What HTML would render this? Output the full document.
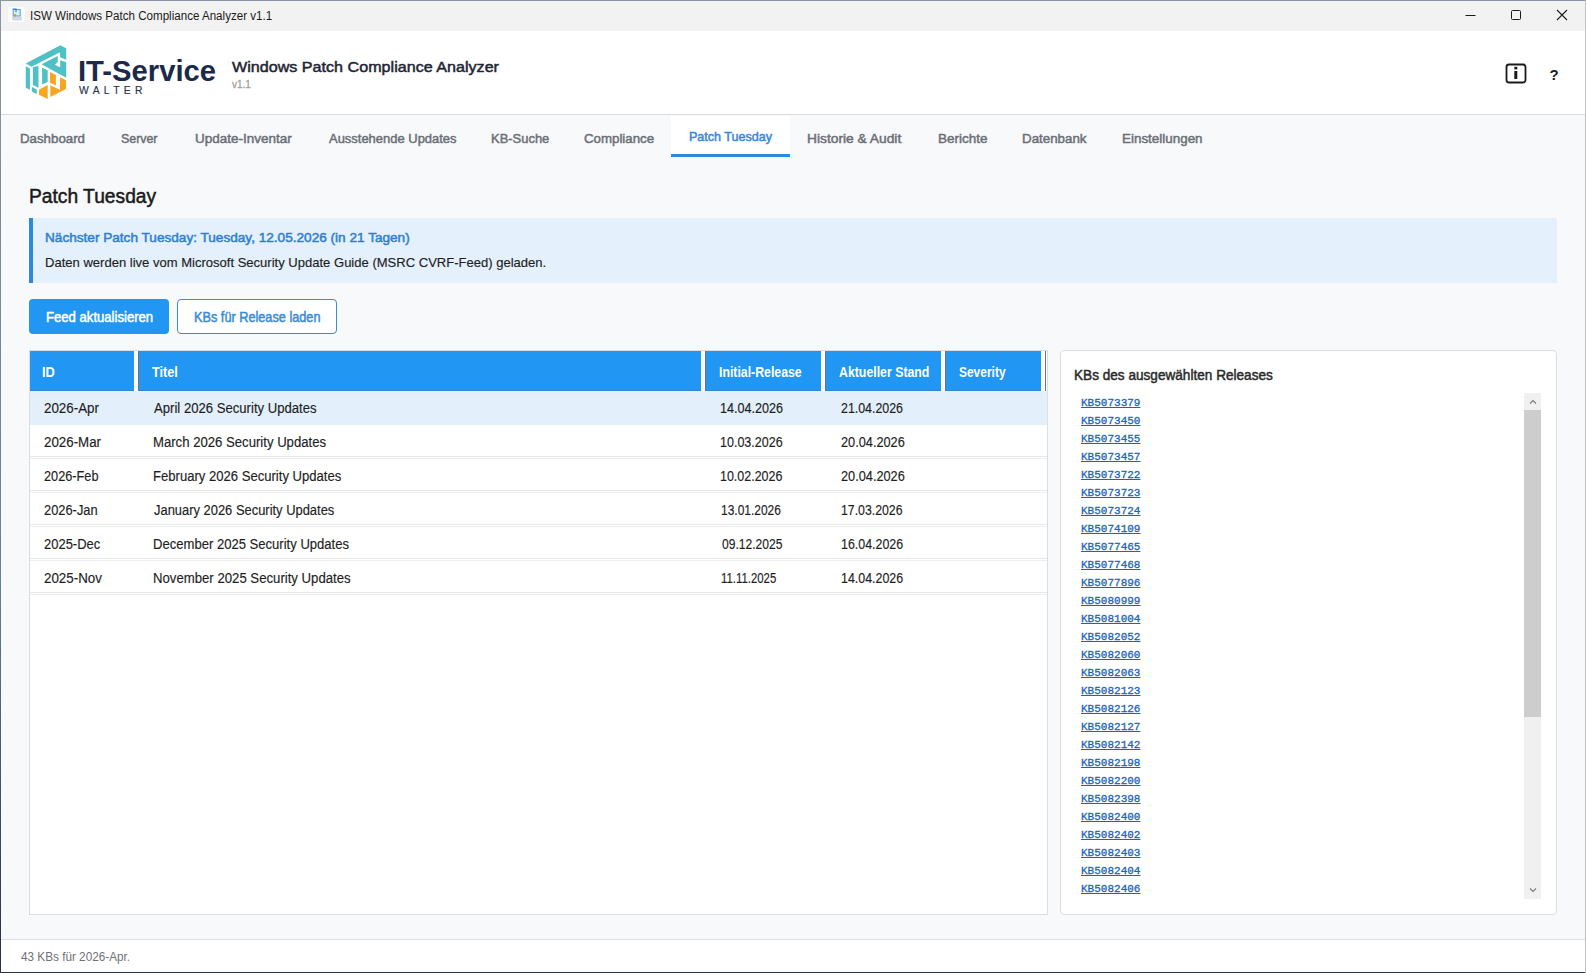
<!DOCTYPE html>
<html><head><meta charset="utf-8"><title>ISW Windows Patch Compliance Analyzer v1.1</title>
<style>
html,body{margin:0;padding:0;width:1586px;height:973px;overflow:hidden;background:#f7f8fa}
.b{position:absolute;box-sizing:content-box}
.t{position:absolute;white-space:pre;line-height:normal;transform-origin:0 0}
</style></head><body>

<div class="b" style="left:0;top:0;width:1586px;height:973px;background:#f8f9fb"></div>
<!-- title bar -->
<div class="b" style="left:0;top:0;width:1586px;height:31px;background:#f2f2f2"></div>
<div class="b" style="left:0;top:1px;width:1586px;height:1px;background:#edf2f5"></div>
<div class="b" style="left:0;top:0;width:1586px;height:1px;background:#8a959f"></div>
<!-- header -->
<div class="b" style="left:0;top:31px;width:1586px;height:83px;background:#ffffff"></div>
<div class="b" style="left:0;top:114px;width:1586px;height:1px;background:#dcdcdc"></div>
<!-- selected tab -->
<div class="b" style="left:671px;top:116px;width:119px;height:41px;background:#ffffff"></div>
<div class="b" style="left:671px;top:154px;width:119px;height:3px;background:#2a8ae0"></div>
<!-- info box -->
<div class="b" style="left:29px;top:218px;width:1528px;height:65px;background:#e4f0fb"></div>
<div class="b" style="left:29px;top:218px;width:4px;height:65px;background:#2a8ae0"></div>
<!-- buttons -->
<div class="b" style="left:29px;top:299px;width:140px;height:35px;background:#2196f3;border-radius:4px"></div>
<div class="b" style="left:177px;top:299px;width:158px;height:33px;background:#ffffff;border:1px solid #3a8ad6;border-radius:4px"></div>
<!-- table -->
<div class="b" style="left:29px;top:350px;width:1017px;height:563px;background:#ffffff;border:1px solid #dadde2"></div>
<div class="b" style="left:30px;top:351px;width:1016px;height:40px;background:#2196f3"></div>
<div class="b" style="left:30px;top:390px;width:1016px;height:1px;background:#2f87d2"></div>
<div class="b" style="left:30px;top:391px;width:1017px;height:34px;background:#e3f0fb"></div>
<div class="b" style="left:134px;top:351px;width:4px;height:40px;background:#fbfcfd"></div><div class="b" style="left:138px;top:351px;width:1px;height:40px;background:#6e7378"></div>
<div class="b" style="left:701px;top:351px;width:4px;height:40px;background:#fbfcfd"></div><div class="b" style="left:705px;top:351px;width:1px;height:40px;background:#6e7378"></div>
<div class="b" style="left:821px;top:351px;width:4px;height:40px;background:#fbfcfd"></div><div class="b" style="left:825px;top:351px;width:1px;height:40px;background:#6e7378"></div>
<div class="b" style="left:941px;top:351px;width:4px;height:40px;background:#fbfcfd"></div><div class="b" style="left:945px;top:351px;width:1px;height:40px;background:#6e7378"></div>
<div class="b" style="left:1041px;top:351px;width:4px;height:40px;background:#fbfcfd"></div><div class="b" style="left:1045px;top:351px;width:1px;height:40px;background:#6e7378"></div>
<div class="b" style="left:30px;top:456px;width:1017px;height:1px;background:#e6e8eb"></div><div class="b" style="left:30px;top:458px;width:1017px;height:1px;background:#eceef0"></div>
<div class="b" style="left:30px;top:490px;width:1017px;height:1px;background:#e6e8eb"></div><div class="b" style="left:30px;top:492px;width:1017px;height:1px;background:#eceef0"></div>
<div class="b" style="left:30px;top:524px;width:1017px;height:1px;background:#e6e8eb"></div><div class="b" style="left:30px;top:526px;width:1017px;height:1px;background:#eceef0"></div>
<div class="b" style="left:30px;top:558px;width:1017px;height:1px;background:#e6e8eb"></div><div class="b" style="left:30px;top:560px;width:1017px;height:1px;background:#eceef0"></div>
<div class="b" style="left:30px;top:592px;width:1017px;height:1px;background:#e6e8eb"></div><div class="b" style="left:30px;top:594px;width:1017px;height:1px;background:#eceef0"></div>

<!-- right panel -->
<div class="b" style="left:1060px;top:350px;width:495px;height:563px;background:#ffffff;border:1px solid #dadde2;border-radius:4px"></div>
<div class="b" style="left:1524px;top:393px;width:17px;height:506px;background:#f0f0f0"></div>
<div class="b" style="left:1524px;top:410px;width:17px;height:307px;background:#cdcdcd"></div>
<svg class="b" style="left:1524px;top:393px" width="17" height="506" viewBox="0 0 17 506">
<path d="M6 10.5 L9 7.5 L12 10.5" fill="none" stroke="#7a7a7a" stroke-width="1.1"/>
<path d="M6 495.5 L9 498.5 L12 495.5" fill="none" stroke="#7a7a7a" stroke-width="1.1"/>
</svg>
<!-- status bar -->
<div class="b" style="left:0;top:939px;width:1586px;height:1px;background:#dcdfe3"></div>
<div class="b" style="left:0;top:940px;width:1586px;height:32px;background:#ffffff"></div>
<div class="b" style="left:0;top:972px;width:1586px;height:1px;background:#28304a"></div>
<div class="b" style="left:0;top:0;width:1px;height:973px;background:linear-gradient(#8d96a3,#7f8c98 20%,#5f8494 60%,#3a4a66 85%,#26304a)"></div>
<div class="b" style="left:1585px;top:0;width:1px;height:973px;background:#bfc3c8"></div>
<!-- title bar icon -->
<svg class="b" style="left:8px;top:7px" width="17" height="15" viewBox="0 0 17 15">
<rect x="0" y="0" width="16.5" height="15" fill="#fafcfd"/>
<rect x="5.2" y="2.5" width="7" height="6.5" fill="#d8f1f8" stroke="#5a9ccc" stroke-width="1"/>
<path d="M4.7 2 H8 V5" fill="none" stroke="#3f7fb5" stroke-width="1.2"/>
<circle cx="7" cy="8.2" r="1.3" fill="#d69b3a"/>
<rect x="4" y="10.3" width="10" height="1.2" fill="#b7c3cc"/>
<rect x="4.5" y="12" width="9.5" height="1.3" fill="#c9d2d9"/>
</svg>
<!-- window controls -->
<svg class="b" style="left:1440px;top:0" width="146" height="30" viewBox="0 0 146 30">
<path d="M25.5 15.5 H35.5" stroke="#1a1a1a" stroke-width="1"/>
<rect x="71.5" y="10.5" width="9" height="9" fill="none" stroke="#1a1a1a" stroke-width="1" rx="1"/>
<path d="M117 10 L127 20 M127 10 L117 20" stroke="#1a1a1a" stroke-width="1.1"/>
</svg>
<!-- info / help icons -->
<svg class="b" style="left:1500px;top:58px" width="64" height="32" viewBox="0 0 64 32">
<rect x="6.5" y="6.5" width="19" height="18" rx="2.5" fill="none" stroke="#1a1a1a" stroke-width="1.8"/>
<rect x="14.3" y="13" width="3" height="8" fill="#1a1a1a"/>
<rect x="14.3" y="8.8" width="3" height="2.6" fill="#1a1a1a"/>
</svg>
<div class="t" style="left:1549.5px;top:65.5px;font:bold 15px 'Liberation Sans', sans-serif;color:#1a1a1a">?</div>
<!-- logo -->
<svg class="b" style="left:20px;top:40px" width="52" height="64" viewBox="0 0 791 973">
<g fill="#4fc1c6">
<polygon points="87,357 614,80 703,127 703,301 611,262 609,186 175,407"/>
<polygon points="328,369 574,245 574,336 532,376 598,412 611,412 611,306 703,340 703,574"/>
<polygon points="88,398 151,432 151,756 88,725"/>
<polygon points="196,412 281,395 281,726 196,686"/>
<polygon points="336,420 421,460 421,640 336,676"/>
<polygon points="181,716 256,751 256,821 181,786"/>
</g>
<g fill="#f6a623">
<polygon points="456,486 546,533 546,690 456,650"/>
<polygon points="611,568 701,613 701,746 461,866 461,688 606,758"/>
<polygon points="288,756 421,686 421,896 288,831"/>
</g>
</svg>

<div class="t" style="left:29.57px;top:9.00px;font:normal 12.5px 'Liberation Sans', sans-serif;color:#1a1a1a;transform:scaleX(0.9270);">ISW Windows Patch Compliance Analyzer v1.1</div>
<div class="t" style="left:77.61px;top:54.00px;font:bold 29.36px 'Liberation Sans', sans-serif;color:#1b2a4a;transform:scaleX(0.9949);">IT-Service</div>
<div class="t" style="left:79.00px;top:85.00px;font:normal 10.32px 'Liberation Sans', sans-serif;color:#2a3548;transform:scaleX(1.0000);letter-spacing:4.32px;-webkit-text-stroke:0.15px #2a3548;">WALTER</div>
<div class="t" style="left:232.20px;top:58.00px;font:normal 15.26px 'Liberation Sans', sans-serif;color:#1f2533;transform:scaleX(1.0570);-webkit-text-stroke:0.5px #1f2533;">Windows Patch Compliance Analyzer</div>
<div class="t" style="left:232.00px;top:79.00px;font:normal 10.47px 'Liberation Sans', sans-serif;color:#a0a0a0;transform:scaleX(0.9517);-webkit-text-stroke:0.3px #a0a0a0;">v1.1</div>
<div class="t" style="left:20.13px;top:131.00px;font:normal 13.66px 'Liberation Sans', sans-serif;color:#6b6f76;transform:scaleX(0.9722);-webkit-text-stroke:0.5px #6b6f76;">Dashboard</div>
<div class="t" style="left:121.40px;top:131.00px;font:normal 13.66px 'Liberation Sans', sans-serif;color:#6b6f76;transform:scaleX(0.9072);-webkit-text-stroke:0.5px #6b6f76;">Server</div>
<div class="t" style="left:194.51px;top:131.00px;font:normal 13.66px 'Liberation Sans', sans-serif;color:#6b6f76;transform:scaleX(0.9869);-webkit-text-stroke:0.5px #6b6f76;">Update-Inventar</div>
<div class="t" style="left:328.50px;top:131.00px;font:normal 13.66px 'Liberation Sans', sans-serif;color:#6b6f76;transform:scaleX(0.9491);-webkit-text-stroke:0.5px #6b6f76;">Ausstehende Updates</div>
<div class="t" style="left:490.85px;top:131.00px;font:normal 13.66px 'Liberation Sans', sans-serif;color:#6b6f76;transform:scaleX(0.9484);-webkit-text-stroke:0.5px #6b6f76;">KB-Suche</div>
<div class="t" style="left:584.00px;top:131.00px;font:normal 13.66px 'Liberation Sans', sans-serif;color:#6b6f76;transform:scaleX(0.9718);-webkit-text-stroke:0.5px #6b6f76;">Compliance</div>
<div class="t" style="left:688.53px;top:129.00px;font:normal 12.94px 'Liberation Sans', sans-serif;color:#3787da;transform:scaleX(0.9690);-webkit-text-stroke:0.5px #3787da;">Patch Tuesday</div>
<div class="t" style="left:806.99px;top:131.00px;font:normal 13.66px 'Liberation Sans', sans-serif;color:#6b6f76;transform:scaleX(1.0094);-webkit-text-stroke:0.5px #6b6f76;">Historie &amp; Audit</div>
<div class="t" style="left:938.01px;top:131.00px;font:normal 13.66px 'Liberation Sans', sans-serif;color:#6b6f76;transform:scaleX(0.9876);-webkit-text-stroke:0.5px #6b6f76;">Berichte</div>
<div class="t" style="left:1022.32px;top:131.00px;font:normal 13.66px 'Liberation Sans', sans-serif;color:#6b6f76;transform:scaleX(0.9766);-webkit-text-stroke:0.5px #6b6f76;">Datenbank</div>
<div class="t" style="left:1122.02px;top:131.00px;font:normal 13.66px 'Liberation Sans', sans-serif;color:#6b6f76;transform:scaleX(0.9826);-webkit-text-stroke:0.5px #6b6f76;">Einstellungen</div>
<div class="t" style="left:29.23px;top:185.00px;font:normal 19.77px 'Liberation Sans', sans-serif;color:#1a1a1a;transform:scaleX(0.9721);-webkit-text-stroke:0.5px #1a1a1a;">Patch Tuesday</div>
<div class="t" style="left:44.77px;top:230.00px;font:normal 13.23px 'Liberation Sans', sans-serif;color:#2f7fd0;transform:scaleX(1.0290);-webkit-text-stroke:0.5px #2f7fd0;">Nächster Patch Tuesday: Tuesday, 12.05.2026 (in 21 Tagen)</div>
<div class="t" style="left:44.78px;top:255.00px;font:normal 12.79px 'Liberation Sans', sans-serif;color:#1e1e1e;transform:scaleX(1.0196);-webkit-text-stroke:0.15px #1e1e1e;">Daten werden live vom Microsoft Security Update Guide (MSRC CVRF-Feed) geladen.</div>
<div class="t" style="left:45.68px;top:309.00px;font:normal 14.24px 'Liberation Sans', sans-serif;color:#ffffff;transform:scaleX(0.9213);-webkit-text-stroke:0.5px #ffffff;">Feed aktualisieren</div>
<div class="t" style="left:193.91px;top:309.00px;font:normal 14.24px 'Liberation Sans', sans-serif;color:#3a8ad6;transform:scaleX(0.8932);-webkit-text-stroke:0.5px #3a8ad6;">KBs für Release laden</div>
<div class="t" style="left:42.40px;top:364.00px;font:bold 14.24px 'Liberation Sans', sans-serif;color:#ffffff;transform:scaleX(0.9029);">ID</div>
<div class="t" style="left:152.30px;top:364.00px;font:bold 14.24px 'Liberation Sans', sans-serif;color:#ffffff;transform:scaleX(0.8913);">Titel</div>
<div class="t" style="left:719.10px;top:364.00px;font:bold 14.24px 'Liberation Sans', sans-serif;color:#ffffff;transform:scaleX(0.8632);">Initial-Release</div>
<div class="t" style="left:839.40px;top:364.00px;font:bold 14.24px 'Liberation Sans', sans-serif;color:#ffffff;transform:scaleX(0.8658);">Aktueller Stand</div>
<div class="t" style="left:959.20px;top:364.00px;font:bold 14.24px 'Liberation Sans', sans-serif;color:#ffffff;transform:scaleX(0.8400);">Severity</div>
<div class="t" style="left:44.20px;top:400.00px;font:normal 13.81px 'Liberation Sans', sans-serif;color:#1e1e1e;transform:scaleX(0.9692);-webkit-text-stroke:0.15px #1e1e1e;">2026-Apr</div>
<div class="t" style="left:154.40px;top:400.00px;font:normal 13.81px 'Liberation Sans', sans-serif;color:#1e1e1e;transform:scaleX(0.9508);-webkit-text-stroke:0.15px #1e1e1e;">April 2026 Security Updates</div>
<div class="t" style="left:719.99px;top:400.00px;font:normal 13.81px 'Liberation Sans', sans-serif;color:#1e1e1e;transform:scaleX(0.9140);-webkit-text-stroke:0.15px #1e1e1e;">14.04.2026</div>
<div class="t" style="left:840.90px;top:400.00px;font:normal 13.81px 'Liberation Sans', sans-serif;color:#1e1e1e;transform:scaleX(0.8980);-webkit-text-stroke:0.15px #1e1e1e;">21.04.2026</div>
<div class="t" style="left:44.20px;top:434.00px;font:normal 13.81px 'Liberation Sans', sans-serif;color:#1e1e1e;transform:scaleX(0.9655);-webkit-text-stroke:0.15px #1e1e1e;">2026-Mar</div>
<div class="t" style="left:153.45px;top:434.00px;font:normal 13.81px 'Liberation Sans', sans-serif;color:#1e1e1e;transform:scaleX(0.9522);-webkit-text-stroke:0.15px #1e1e1e;">March 2026 Security Updates</div>
<div class="t" style="left:719.99px;top:434.00px;font:normal 13.81px 'Liberation Sans', sans-serif;color:#1e1e1e;transform:scaleX(0.9067);-webkit-text-stroke:0.15px #1e1e1e;">10.03.2026</div>
<div class="t" style="left:840.90px;top:434.00px;font:normal 13.81px 'Liberation Sans', sans-serif;color:#1e1e1e;transform:scaleX(0.9239);-webkit-text-stroke:0.15px #1e1e1e;">20.04.2026</div>
<div class="t" style="left:44.20px;top:468.00px;font:normal 13.81px 'Liberation Sans', sans-serif;color:#1e1e1e;transform:scaleX(0.9227);-webkit-text-stroke:0.15px #1e1e1e;">2026-Feb</div>
<div class="t" style="left:153.45px;top:468.00px;font:normal 13.81px 'Liberation Sans', sans-serif;color:#1e1e1e;transform:scaleX(0.9478);-webkit-text-stroke:0.15px #1e1e1e;">February 2026 Security Updates</div>
<div class="t" style="left:720.00px;top:468.00px;font:normal 13.81px 'Liberation Sans', sans-serif;color:#1e1e1e;transform:scaleX(0.9038);-webkit-text-stroke:0.15px #1e1e1e;">10.02.2026</div>
<div class="t" style="left:840.90px;top:468.00px;font:normal 13.81px 'Liberation Sans', sans-serif;color:#1e1e1e;transform:scaleX(0.9239);-webkit-text-stroke:0.15px #1e1e1e;">20.04.2026</div>
<div class="t" style="left:44.20px;top:502.00px;font:normal 13.81px 'Liberation Sans', sans-serif;color:#1e1e1e;transform:scaleX(0.9321);-webkit-text-stroke:0.15px #1e1e1e;">2026-Jan</div>
<div class="t" style="left:154.40px;top:502.00px;font:normal 13.81px 'Liberation Sans', sans-serif;color:#1e1e1e;transform:scaleX(0.9366);-webkit-text-stroke:0.15px #1e1e1e;">January 2026 Security Updates</div>
<div class="t" style="left:720.73px;top:502.00px;font:normal 13.81px 'Liberation Sans', sans-serif;color:#1e1e1e;transform:scaleX(0.8672);-webkit-text-stroke:0.15px #1e1e1e;">13.01.2026</div>
<div class="t" style="left:840.81px;top:502.00px;font:normal 13.81px 'Liberation Sans', sans-serif;color:#1e1e1e;transform:scaleX(0.8906);-webkit-text-stroke:0.15px #1e1e1e;">17.03.2026</div>
<div class="t" style="left:44.20px;top:536.00px;font:normal 13.81px 'Liberation Sans', sans-serif;color:#1e1e1e;transform:scaleX(0.9395);-webkit-text-stroke:0.15px #1e1e1e;">2025-Dec</div>
<div class="t" style="left:153.45px;top:536.00px;font:normal 13.81px 'Liberation Sans', sans-serif;color:#1e1e1e;transform:scaleX(0.9468);-webkit-text-stroke:0.15px #1e1e1e;">December 2025 Security Updates</div>
<div class="t" style="left:721.60px;top:536.00px;font:normal 13.81px 'Liberation Sans', sans-serif;color:#1e1e1e;transform:scaleX(0.8749);-webkit-text-stroke:0.15px #1e1e1e;">09.12.2025</div>
<div class="t" style="left:840.80px;top:536.00px;font:normal 13.81px 'Liberation Sans', sans-serif;color:#1e1e1e;transform:scaleX(0.8994);-webkit-text-stroke:0.15px #1e1e1e;">16.04.2026</div>
<div class="t" style="left:44.20px;top:570.00px;font:normal 13.81px 'Liberation Sans', sans-serif;color:#1e1e1e;transform:scaleX(0.9679);-webkit-text-stroke:0.15px #1e1e1e;">2025-Nov</div>
<div class="t" style="left:153.45px;top:570.00px;font:normal 13.81px 'Liberation Sans', sans-serif;color:#1e1e1e;transform:scaleX(0.9546);-webkit-text-stroke:0.15px #1e1e1e;">November 2025 Security Updates</div>
<div class="t" style="left:720.78px;top:570.00px;font:normal 13.81px 'Liberation Sans', sans-serif;color:#1e1e1e;transform:scaleX(0.8247);-webkit-text-stroke:0.15px #1e1e1e;">11.11.2025</div>
<div class="t" style="left:840.80px;top:570.00px;font:normal 13.81px 'Liberation Sans', sans-serif;color:#1e1e1e;transform:scaleX(0.8994);-webkit-text-stroke:0.15px #1e1e1e;">14.04.2026</div>
<div class="t" style="left:1074.47px;top:367.00px;font:normal 14.68px 'Liberation Sans', sans-serif;color:#2b2b2b;transform:scaleX(0.9270);-webkit-text-stroke:0.5px #2b2b2b;">KBs des ausgewählten Releases</div>
<div class="t" style="left:1081.30px;top:397.00px;font:normal 10.93px 'Liberation Mono', monospace;color:#1d63b8;transform:scaleX(1.0080);text-decoration:underline;-webkit-text-stroke:0.3px #1d63b8;">KB5073379</div>
<div class="t" style="left:1081.30px;top:415.00px;font:normal 10.93px 'Liberation Mono', monospace;color:#1d63b8;transform:scaleX(1.0080);text-decoration:underline;-webkit-text-stroke:0.3px #1d63b8;">KB5073450</div>
<div class="t" style="left:1081.30px;top:433.00px;font:normal 10.93px 'Liberation Mono', monospace;color:#1d63b8;transform:scaleX(1.0080);text-decoration:underline;-webkit-text-stroke:0.3px #1d63b8;">KB5073455</div>
<div class="t" style="left:1081.30px;top:451.00px;font:normal 10.93px 'Liberation Mono', monospace;color:#1d63b8;transform:scaleX(1.0080);text-decoration:underline;-webkit-text-stroke:0.3px #1d63b8;">KB5073457</div>
<div class="t" style="left:1081.30px;top:469.00px;font:normal 10.93px 'Liberation Mono', monospace;color:#1d63b8;transform:scaleX(1.0080);text-decoration:underline;-webkit-text-stroke:0.3px #1d63b8;">KB5073722</div>
<div class="t" style="left:1081.30px;top:487.00px;font:normal 10.93px 'Liberation Mono', monospace;color:#1d63b8;transform:scaleX(1.0080);text-decoration:underline;-webkit-text-stroke:0.3px #1d63b8;">KB5073723</div>
<div class="t" style="left:1081.30px;top:505.00px;font:normal 10.93px 'Liberation Mono', monospace;color:#1d63b8;transform:scaleX(1.0080);text-decoration:underline;-webkit-text-stroke:0.3px #1d63b8;">KB5073724</div>
<div class="t" style="left:1081.30px;top:523.00px;font:normal 10.93px 'Liberation Mono', monospace;color:#1d63b8;transform:scaleX(1.0080);text-decoration:underline;-webkit-text-stroke:0.3px #1d63b8;">KB5074109</div>
<div class="t" style="left:1081.30px;top:541.00px;font:normal 10.93px 'Liberation Mono', monospace;color:#1d63b8;transform:scaleX(1.0080);text-decoration:underline;-webkit-text-stroke:0.3px #1d63b8;">KB5077465</div>
<div class="t" style="left:1081.30px;top:559.00px;font:normal 10.93px 'Liberation Mono', monospace;color:#1d63b8;transform:scaleX(1.0080);text-decoration:underline;-webkit-text-stroke:0.3px #1d63b8;">KB5077468</div>
<div class="t" style="left:1081.30px;top:577.00px;font:normal 10.93px 'Liberation Mono', monospace;color:#1d63b8;transform:scaleX(1.0080);text-decoration:underline;-webkit-text-stroke:0.3px #1d63b8;">KB5077896</div>
<div class="t" style="left:1081.30px;top:595.00px;font:normal 10.93px 'Liberation Mono', monospace;color:#1d63b8;transform:scaleX(1.0080);text-decoration:underline;-webkit-text-stroke:0.3px #1d63b8;">KB5080999</div>
<div class="t" style="left:1081.30px;top:613.00px;font:normal 10.93px 'Liberation Mono', monospace;color:#1d63b8;transform:scaleX(1.0080);text-decoration:underline;-webkit-text-stroke:0.3px #1d63b8;">KB5081004</div>
<div class="t" style="left:1081.30px;top:631.00px;font:normal 10.93px 'Liberation Mono', monospace;color:#1d63b8;transform:scaleX(1.0080);text-decoration:underline;-webkit-text-stroke:0.3px #1d63b8;">KB5082052</div>
<div class="t" style="left:1081.30px;top:649.00px;font:normal 10.93px 'Liberation Mono', monospace;color:#1d63b8;transform:scaleX(1.0080);text-decoration:underline;-webkit-text-stroke:0.3px #1d63b8;">KB5082060</div>
<div class="t" style="left:1081.30px;top:667.00px;font:normal 10.93px 'Liberation Mono', monospace;color:#1d63b8;transform:scaleX(1.0080);text-decoration:underline;-webkit-text-stroke:0.3px #1d63b8;">KB5082063</div>
<div class="t" style="left:1081.30px;top:685.00px;font:normal 10.93px 'Liberation Mono', monospace;color:#1d63b8;transform:scaleX(1.0080);text-decoration:underline;-webkit-text-stroke:0.3px #1d63b8;">KB5082123</div>
<div class="t" style="left:1081.30px;top:703.00px;font:normal 10.93px 'Liberation Mono', monospace;color:#1d63b8;transform:scaleX(1.0080);text-decoration:underline;-webkit-text-stroke:0.3px #1d63b8;">KB5082126</div>
<div class="t" style="left:1081.30px;top:721.00px;font:normal 10.93px 'Liberation Mono', monospace;color:#1d63b8;transform:scaleX(1.0080);text-decoration:underline;-webkit-text-stroke:0.3px #1d63b8;">KB5082127</div>
<div class="t" style="left:1081.30px;top:739.00px;font:normal 10.93px 'Liberation Mono', monospace;color:#1d63b8;transform:scaleX(1.0080);text-decoration:underline;-webkit-text-stroke:0.3px #1d63b8;">KB5082142</div>
<div class="t" style="left:1081.30px;top:757.00px;font:normal 10.93px 'Liberation Mono', monospace;color:#1d63b8;transform:scaleX(1.0080);text-decoration:underline;-webkit-text-stroke:0.3px #1d63b8;">KB5082198</div>
<div class="t" style="left:1081.30px;top:775.00px;font:normal 10.93px 'Liberation Mono', monospace;color:#1d63b8;transform:scaleX(1.0080);text-decoration:underline;-webkit-text-stroke:0.3px #1d63b8;">KB5082200</div>
<div class="t" style="left:1081.30px;top:793.00px;font:normal 10.93px 'Liberation Mono', monospace;color:#1d63b8;transform:scaleX(1.0080);text-decoration:underline;-webkit-text-stroke:0.3px #1d63b8;">KB5082398</div>
<div class="t" style="left:1081.30px;top:811.00px;font:normal 10.93px 'Liberation Mono', monospace;color:#1d63b8;transform:scaleX(1.0080);text-decoration:underline;-webkit-text-stroke:0.3px #1d63b8;">KB5082400</div>
<div class="t" style="left:1081.30px;top:829.00px;font:normal 10.93px 'Liberation Mono', monospace;color:#1d63b8;transform:scaleX(1.0080);text-decoration:underline;-webkit-text-stroke:0.3px #1d63b8;">KB5082402</div>
<div class="t" style="left:1081.30px;top:847.00px;font:normal 10.93px 'Liberation Mono', monospace;color:#1d63b8;transform:scaleX(1.0080);text-decoration:underline;-webkit-text-stroke:0.3px #1d63b8;">KB5082403</div>
<div class="t" style="left:1081.30px;top:865.00px;font:normal 10.93px 'Liberation Mono', monospace;color:#1d63b8;transform:scaleX(1.0080);text-decoration:underline;-webkit-text-stroke:0.3px #1d63b8;">KB5082404</div>
<div class="t" style="left:1081.30px;top:883.00px;font:normal 10.93px 'Liberation Mono', monospace;color:#1d63b8;transform:scaleX(1.0080);text-decoration:underline;-webkit-text-stroke:0.3px #1d63b8;">KB5082406</div>
<div class="t" style="left:21.00px;top:950.00px;font:normal 12.5px 'Liberation Sans', sans-serif;color:#6e7176;transform:scaleX(0.9397);">43 KBs für 2026-Apr.</div>
</body></html>
